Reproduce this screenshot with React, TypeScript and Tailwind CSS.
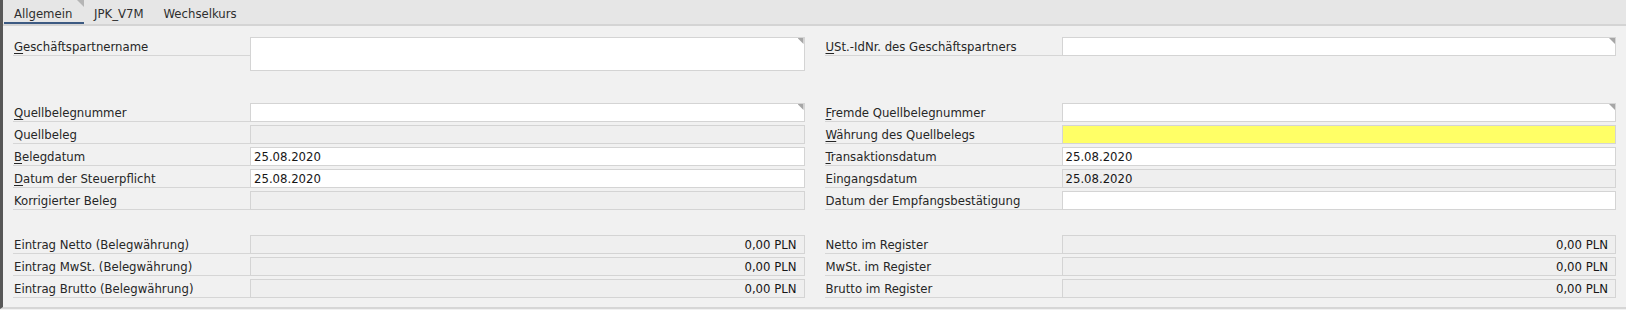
import React from 'react';

type Kind = 'edit' | 'readonly' | 'yellow';

interface FieldProps {
  label: string;
  accel?: boolean;
  kind?: Kind;
  value?: string;
  amount?: boolean;
  corner?: boolean;
  tall?: boolean;
  className?: string;
}

function Corner() {
  return (
    <span className="absolute top-0 right-0 w-[6px] h-[6px] bg-[#a6a6a6] [clip-path:polygon(0_0,100%_0,100%_100%)]" />
  );
}

function Field({ label, accel, kind = 'edit', value, amount, corner, tall, className = '' }: FieldProps) {
  const box =
    kind === 'edit' ? 'bg-white' : kind === 'yellow' ? 'bg-[#ffff66]' : 'bg-[#efefef]';
  return (
    <div className={`flex items-start ${className}`}>
      <div className="w-[237px] shrink-0 h-[19px] leading-[19px] border-b border-[#d6d6d6] text-[#262626] pl-px">
        {accel ? (
          <>
            <span className="underline underline-offset-2">{label[0]}</span>
            {label.slice(1)}
          </>
        ) : (
          label
        )}
      </div>
      <div
        className={`relative flex-1 border border-[#d4d4d4] ${box} ${tall ? 'h-[34px]' : 'h-[19px]'} leading-[17px] text-[#161616] ${
          amount ? 'text-right pr-[7px]' : 'pl-[3px]'
        }`}
      >
        {value}
        {corner && <Corner />}
      </div>
    </div>
  );
}

export default function App() {
  return (
    <div
      className="h-[310px] w-full bg-[#f1f1f1] text-[13px] font-stretch-condensed"
      style={{ fontFamily: '"DejaVu Sans Condensed", "DejaVu Sans", sans-serif' }}
    >
      <div className="border-l-[3px] border-l-[#575757] border-b-2 border-b-[#d6d6d6]">
        {/* Tab strip */}
        <div className="h-[26px] bg-[#e6e6e6] border-b-2 border-[#d4d4d4] flex pl-px text-[#2e2e2e]">
          <div className="relative h-[24px] px-[10px] pt-[4px] border-b-2 border-[#3c5a82] w-[80px]">
            Allgemein
            <span className="absolute top-0 right-0 w-[7px] h-[7px] bg-[#b5b5b5] [clip-path:polygon(0_0,100%_0,100%_100%)]" />
          </div>
          <div className="h-[24px] px-[10px] pt-[4px]">JPK_V7M</div>
          <div className="h-[24px] px-[10px] pt-[4px]">Wechselkurs</div>
        </div>

        {/* Form body */}
        <div className="pt-[11px] pb-[9px] pl-[10px] pr-[10px] grid grid-cols-2 gap-x-[20px] gap-y-[3px] items-start">
          <Field label="Geschäftspartnername" accel tall corner />
          <Field label="USt.-IdNr. des Geschäftspartners" accel corner />

          <Field label="Quellbelegnummer" accel corner className="mt-[29px]" />
          <Field label="Fremde Quellbelegnummer" accel corner className="mt-[29px]" />

          <Field label="Quellbeleg" kind="readonly" />
          <Field label="Währung des Quellbelegs" accel kind="yellow" />

          <Field label="Belegdatum" accel value="25.08.2020" />
          <Field label="Transaktionsdatum" accel value="25.08.2020" />

          <Field label="Datum der Steuerpflicht" accel value="25.08.2020" />
          <Field label="Eingangsdatum" kind="readonly" value="25.08.2020" />

          <Field label="Korrigierter Beleg" kind="readonly" />
          <Field label="Datum der Empfangsbestätigung" />

          <Field label="Eintrag Netto (Belegwährung)" kind="readonly" amount value="0,00 PLN" className="mt-[22px]" />
          <Field label="Netto im Register" kind="readonly" amount value="0,00 PLN" className="mt-[22px]" />

          <Field label="Eintrag MwSt. (Belegwährung)" kind="readonly" amount value="0,00 PLN" />
          <Field label="MwSt. im Register" kind="readonly" amount value="0,00 PLN" />

          <Field label="Eintrag Brutto (Belegwährung)" kind="readonly" amount value="0,00 PLN" />
          <Field label="Brutto im Register" kind="readonly" amount value="0,00 PLN" />
        </div>
      </div>
    </div>
  );
}
